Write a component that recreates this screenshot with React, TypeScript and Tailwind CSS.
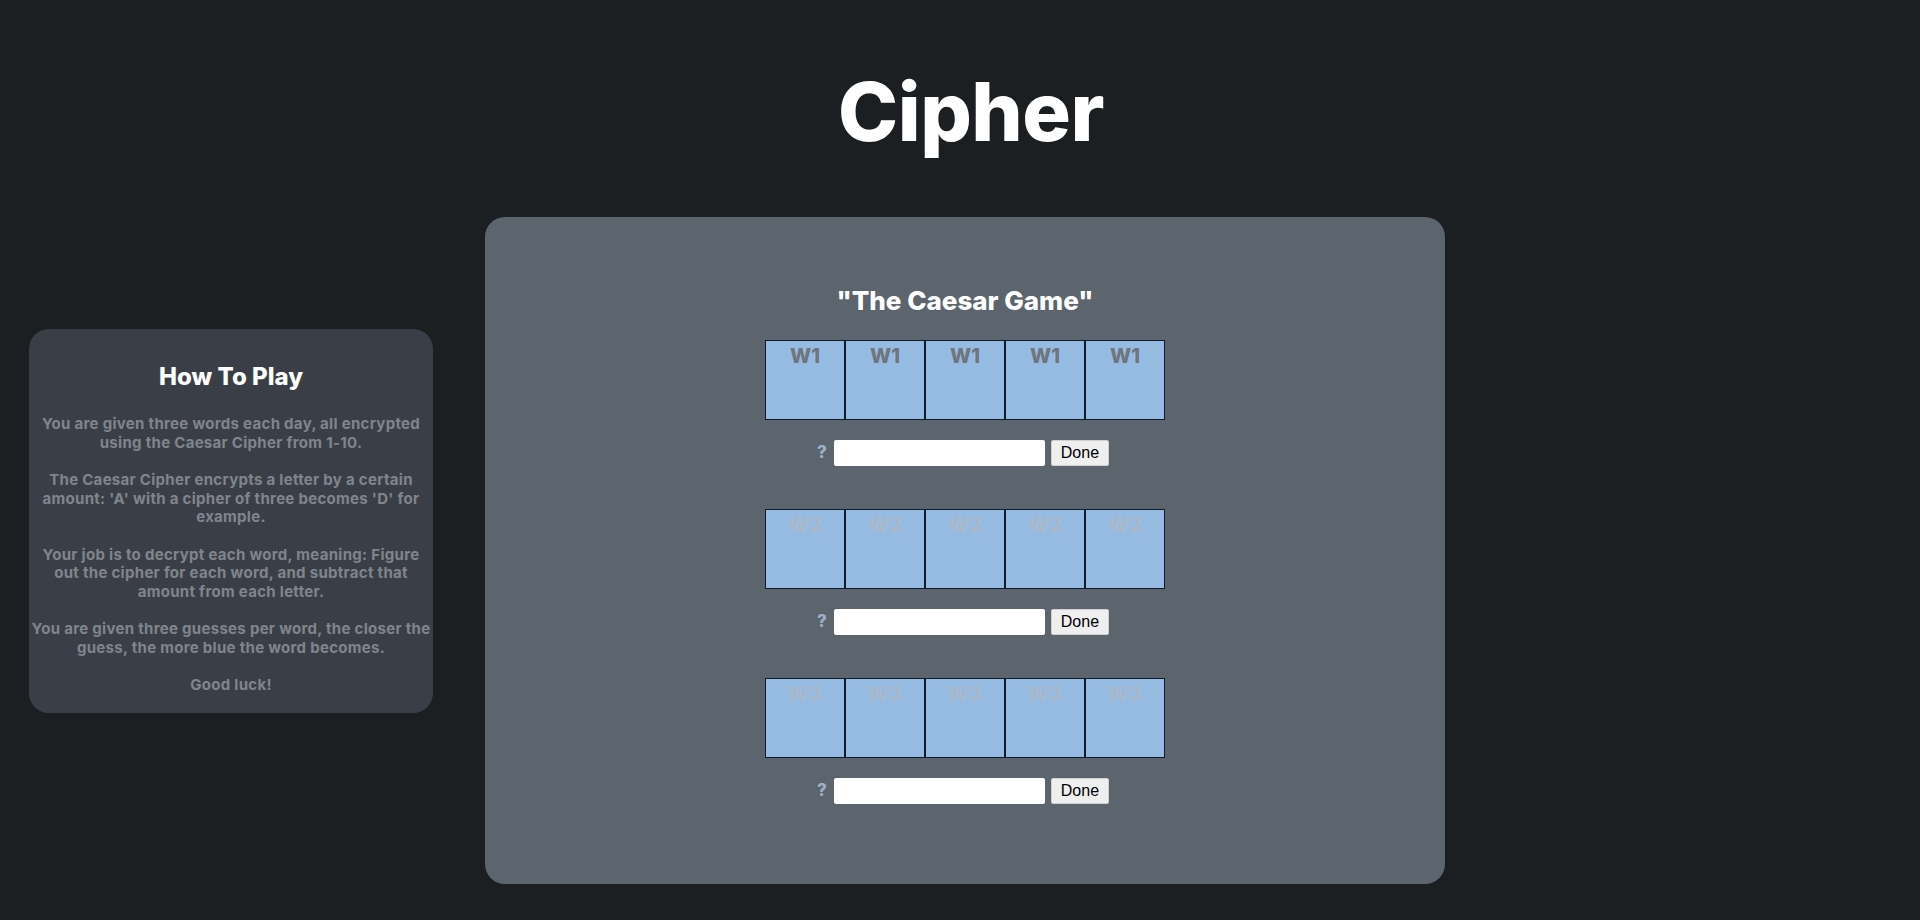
import React from "react";

const words = [
  { label: "W1", tone: "text-[#6f757b]" },
  { label: "W2", tone: "text-[#a9b9cb]" },
  { label: "W3", tone: "text-[#a6b9cd]" },
];

const rules = [
  "You are given three words each day, all encrypted using the Caesar Cipher from 1-10.",
  "The Caesar Cipher encrypts a letter by a certain amount: 'A' with a cipher of three becomes 'D' for example.",
  "Your job is to decrypt each word, meaning: Figure out the cipher for each word, and subtract that amount from each letter.",
  "You are given three guesses per word, the closer the guess, the more blue the word becomes.",
  "Good luck!",
];

function WordRow({ label, tone, first }: { label: string; tone: string; first: boolean }) {
  return (
    <div className={first ? "flex flex-col items-center" : "mt-[43px] flex flex-col items-center"}>
      <div className="flex">
        {[0, 1, 2, 3, 4].map((i) => (
          <div
            key={i}
            className="flex h-[80px] w-[80px] justify-center border border-[#0e1b28] bg-[#95bbe3] pt-[3px]"
          >
            <span className={`text-[20px] leading-[24px] font-extrabold ${tone}`}>{label}</span>
          </div>
        ))}
      </div>
      <div className="mt-[20px] flex h-[26px] items-center pr-[4px]">
        <span className="mr-[7px] text-[17px] font-extrabold text-[#9cb0c8]">?</span>
        <input className="h-[26px] w-[211px] rounded-[2px] bg-white outline-none" type="text" />
        <button className="ml-[6px] h-[26px] w-[58px] rounded-[2px] border border-[#d0d0d0] bg-[#efefef] font-['Liberation_Sans',sans-serif] text-[16px] text-black">
          Done
        </button>
      </div>
    </div>
  );
}

export default function App() {
  return (
    <div className="min-h-[920px] bg-[#1c1f21] font-['Inter',sans-serif]">
      <h1 className="pt-[72px] pl-[22px] text-center text-[81px] leading-[81px] font-extrabold tracking-[-0.5px] text-white">
        Cipher
      </h1>
      <div className="mt-[64px] flex items-start pl-[29px]">
        <aside className="mt-[112px] w-[404px] rounded-[20px] bg-[#3a3f47] px-[2px] pt-[33px] pb-[18px] text-center">
          <h2 className="text-[24px] leading-[30px] font-extrabold text-white">How To Play</h2>
          <div className="mt-[23px] flex flex-col gap-[19px]">
            {rules.map((r) => (
              <p key={r} className="text-[15px] leading-[18.5px] font-bold tracking-[0.3px] text-[#80858c]">
                {r}
              </p>
            ))}
          </div>
        </aside>
        <main className="ml-[52px] w-[960px] rounded-[20px] bg-[#5c646e] pt-[68px] pb-[80px]">
          <h2 className="text-center text-[26px] leading-[32px] font-extrabold text-white">
            "The Caesar Game"
          </h2>
          <div className="mt-[23px]">
            {words.map((w, i) => (
              <WordRow key={w.label} label={w.label} tone={w.tone} first={i === 0} />
            ))}
          </div>
        </main>
      </div>
    </div>
  );
}
